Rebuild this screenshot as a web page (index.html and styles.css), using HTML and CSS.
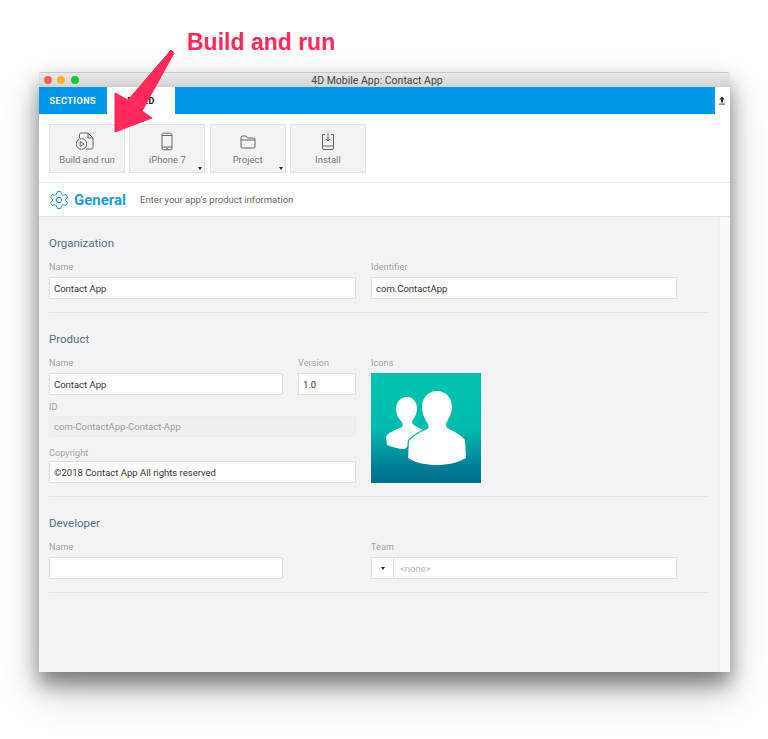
FILE: index.html
```html
<!DOCTYPE html>
<html lang="en">

<head>
    <meta charset="UTF-8">
    <title>4D Mobile App: Contact App</title>
    <link rel="stylesheet" href="styles.css">
</head>

<body>
    <div class="window">
        <div class="titlebar">
            <div class="dots">
                <span class="dot dot-red"></span>
                <span class="dot dot-yellow"></span>
                <span class="dot dot-green"></span>
            </div>
            <div class="title">4D Mobile App: Contact App</div>
        </div>

        <div class="tabbar">
            <div class="tabs">
                <div class="tab">SECTIONS</div>
                <div class="tab tab-active">BUILD</div>
            </div>
            <div class="tab-action">
                <svg width="8" height="9" viewBox="0 0 8 9">
                    <path d="M4 0.5 L6.8 3.5 H5 V6.5 H3 V3.5 H1.2 Z" fill="#333" />
                    <rect x="1" y="7.6" width="6" height="1" fill="#555" />
                </svg>
            </div>
        </div>

        <div class="toolbar">
            <div class="tool">
                <svg class="tool-icon-left" width="20" height="20" viewBox="0 0 20 20" fill="none" stroke="#666" stroke-width="1">
                    <path d="M3.5 6 V2.5 Q3.5 1 5 1 H12 L17 6 V15.5 Q17 17 15.5 17 H10" />
                    <path d="M12 1 V6 H17" />
                    <circle cx="5.5" cy="12" r="5.3" fill="#f3f3f5" />
                    <path d="M4.2 9.6 L8 12 L4.2 14.4 Z" />
                </svg>
                <span>Build and run</span>
            </div>
            <div class="tool tool-menu">
                <svg width="20" height="20" viewBox="0 0 20 20" fill="none" stroke="#666" stroke-width="1">
                    <rect x="5" y="1.2" width="10" height="16.6" rx="1.6" />
                    <path d="M5 3.5 H15 M5 15 H15" />
                    <circle cx="10" cy="16.4" r="0.5" />
                </svg>
                <span>iPhone 7</span>
            </div>
            <div class="tool tool-menu">
                <svg width="20" height="20" viewBox="0 0 20 20" fill="none" stroke="#666" stroke-width="1">
                    <path d="M3 14.5 V5.5 Q3 4 4.5 4 H8 L9.5 6 H15.5 Q17 6 17 7.5 V14.5 Q17 16 15.5 16 H4.5 Q3 16 3 14.5 Z" />
                    <path d="M3 8 H17" />
                </svg>
                <span>Project</span>
            </div>
            <div class="tool">
                <svg width="20" height="20" viewBox="0 0 20 20" fill="none" stroke="#666" stroke-width="1">
                    <path d="M7 2.5 H4.5 V16 Q4.5 17.5 6 17.5 H14 Q15.5 17.5 15.5 16 V2.5 H13" />
                    <path d="M4.5 14 H15.5" />
                    <path d="M10 0.5 V9 M8 7 L10 9 L12 7" />
                </svg>
                <span>Install</span>
            </div>
        </div>

        <div class="section-header">
            <svg width="20" height="20" viewBox="0 0 20 20" fill="none" stroke="#1a9be8" stroke-width="1">
                <path d="M8.3 1.5 H11.7 L12.3 4 L14.4 5.2 L16.9 4.4 L18.6 7.4 L16.7 9.1 V10.9 L18.6 12.6 L16.9 15.6 L14.4 14.8 L12.3 16 L11.7 18.5 H8.3 L7.7 16 L5.6 14.8 L3.1 15.6 L1.4 12.6 L3.3 10.9 V9.1 L1.4 7.4 L3.1 4.4 L5.6 5.2 L7.7 4 Z" stroke-linejoin="round" />
                <circle cx="10" cy="10" r="2.6" />
            </svg>
            <h1>General</h1>
            <p>Enter your app's product information</p>
        </div>

        <div class="content">
            <div class="sections">
                <section class="group">
                    <h2>Organization</h2>
                    <div class="two-cols">
                        <div class="field">
                            <label>Name</label>
                            <div class="box">Contact App</div>
                        </div>
                        <div class="field">
                            <label>Identifier</label>
                            <div class="box">com.ContactApp</div>
                        </div>
                    </div>
                </section>

                <section class="group">
                    <h2>Product</h2>
                    <div class="product-cols">
                        <div class="product-fields">
                            <div class="name-row">
                                <div class="field">
                                    <label>Name</label>
                                    <div class="box">Contact App</div>
                                </div>
                                <div class="field">
                                    <label>Version</label>
                                    <div class="box">1.0</div>
                                </div>
                            </div>
                            <div class="field field-id">
                                <label>ID</label>
                                <div class="box box-disabled">com-ContactApp-Contact-App</div>
                            </div>
                            <div class="field field-copyright">
                                <label>Copyright</label>
                                <div class="box">©2018 Contact App All rights reserved</div>
                            </div>
                        </div>
                        <div class="field">
                            <label>Icons</label>
                            <svg class="app-icon" width="110" height="110" viewBox="0 0 110 110">
                                <defs>
                                    <linearGradient id="teal" gradientUnits="userSpaceOnUse" x1="0" y1="0" x2="0" y2="110">
                                        <stop offset="0" stop-color="#00c3b1" />
                                        <stop offset="0.5" stop-color="#00bdae" />
                                        <stop offset="0.85" stop-color="#007f96" />
                                        <stop offset="1" stop-color="#006f8c" />
                                    </linearGradient>
                                </defs>
                                <rect width="110" height="110" fill="url(#teal)" />
                                <path d="M36 24 C43 24 46 30 46 36 C46 41 43 45 41 49 C41 52 46 54 53 57 L40 70 L34 76 C27 76 21 74 16 72 L15 64 C16 60 24 57 31 54 C32 52 32 50 30 48 C27 45 25 41 25 36 C25 30 29 24 36 24 Z" fill="#fff" />
                                <path d="M66 18 C75 18 81 25 81 34 C81 41 77 46 75 51 C75 54 76 55 78 56 C84 59 90 62 94 67 L95 85 C86 90 76 92 66 92 C55 92 45 90 37 85 L38 68 C43 62 50 59 56 56 C58 55 58 54 57 51 C54 46 51 41 51 34 C51 25 57 18 66 18 Z" fill="#fff" stroke="url(#teal)" stroke-width="2.5" paint-order="stroke" />
                            </svg>
                        </div>
                    </div>
                </section>

                <section class="group">
                    <h2>Developer</h2>
                    <div class="two-cols">
                        <div class="field field-short">
                            <label>Name</label>
                            <div class="box"></div>
                        </div>
                        <div class="field">
                            <label>Team</label>
                            <div class="box box-select">
                                <span class="select-arrow"><i></i></span>
                                <span class="placeholder">&lt;none&gt;</span>
                            </div>
                        </div>
                    </div>
                </section>
            </div>
            <div class="scrollbar"></div>
        </div>
    </div>

    <!-- annotation on top of the screenshot -->
    <div class="callout">Build and run</div>
    <svg class="callout-arrow" width="768" height="160" viewBox="0 0 768 160">
        <path d="M171 50 L174 53 L142 111 L152 118 L115 132 L115 93 L128 100 Z" fill="#ff2a5b" stroke="#ff2a5b" stroke-width="1" stroke-linejoin="round" />
    </svg>
</body>

</html>
```

FILE: styles.css
```css
* {
    box-sizing: border-box;
}

body {
    margin: 0;
    padding: 72px 0 0 38.5px;
    height: 739px;
    overflow: hidden;
    background: #fefefe;
    font-family: 'Roboto', 'Liberation Sans', sans-serif;
    font-size: 9.5px;
    color: #333;
}

.window {
    width: 691px;
    height: 600px;
    display: flex;
    flex-direction: column;
    background: #fff;
    border-radius: 3px 3px 1px 1px;
    box-shadow: 0 12px 20px rgba(0, 0, 0, 0.42), 0 20px 40px rgba(0, 0, 0, 0.2);
}

.titlebar {
    height: 15px;
    padding-right: 14px;
    display: flex;
    align-items: center;
    justify-content: center;
    position: relative;
    background: linear-gradient(to bottom, #e9e9e9, #d2d2d2);
    border-top: 1px solid #c9c9c9;
    border-radius: 3px 3px 0 0;
}

.dots {
    position: absolute;
    left: 5px;
    top: 3px;
    display: flex;
    gap: 5.5px;
}

.dot {
    width: 8px;
    height: 8px;
    border-radius: 50%;
}

.dot-red {
    background: #fb5e50;
}

.dot-yellow {
    background: #fbb52c;
}

.dot-green {
    background: #1cc433;
}

.title {
    color: #444;
    font-size: 10.5px;
}

.tabbar {
    height: 27px;
    display: flex;
}

.tabs {
    width: 676.5px;
    display: flex;
    background: #0099ea;
}

.tab {
    width: 68.5px;
    display: flex;
    align-items: center;
    justify-content: center;
    color: #fff;
    font-size: 9px;
    font-weight: 700;
    letter-spacing: 0.5px;
}

.tab-active {
    width: 68px;
    background: #fff;
    color: #111;
}

.tab-action {
    flex: 1;
    display: flex;
    align-items: center;
    justify-content: center;
}

.toolbar {
    height: 68px;
    padding: 9.5px 0 0 10.5px;
    display: flex;
    gap: 4.3px;
}

.tool {
    width: 76px;
    height: 49.5px;
    position: relative;
    display: flex;
    flex-direction: column;
    align-items: center;
    padding-top: 7.5px;
    gap: 2px;
    background: #f3f3f5;
    border: 1.5px solid #e2e2e2;
    color: #777;
}

.tool-icon-left {
    margin-right: 2px;
}

.tool span {
    line-height: 12px;
}

.tool-menu::after {
    content: "";
    position: absolute;
    right: 2px;
    bottom: 2px;
    border-left: 2.5px solid transparent;
    border-right: 2.5px solid transparent;
    border-top: 3px solid #222;
}

.section-header {
    height: 35px;
    padding-left: 10.5px;
    display: flex;
    align-items: center;
    border-top: 1px solid #e6e6e6;
    border-bottom: 1px solid #e2e2e2;
}

.section-header h1 {
    margin: 0 0 0 5px;
    color: #1a9be8;
    font-size: 15px;
    font-weight: 700;
}

.section-header p {
    margin: 0 0 0 14px;
    color: #666;
}

.content {
    flex: 1;
    display: flex;
    background: #f3f3f5;
}

.sections {
    flex: 1;
    padding: 0 11px 0 10.5px;
}

.scrollbar {
    width: 10.5px;
    background: #f9f9f9;
    border-left: 1px solid #efeff0;
}

.group {
    padding: 19px 0 13px;
    border-bottom: 1px solid #e3e3e5;
}

.group h2 {
    margin: 0 0 11px;
    color: #54707f;
    font-size: 11.5px;
    font-weight: 400;
    line-height: 14px;
}

.two-cols {
    display: grid;
    grid-template-columns: 307px 306px;
    column-gap: 15px;
}

.field label {
    display: block;
    margin-bottom: 4px;
    color: #a2a2a2;
    font-size: 9px;
    line-height: 12px;
    letter-spacing: 0.1px;
}

.field-short {
    width: 234px;
}

.field-id label {
    margin-bottom: 3px;
}

.field-copyright {
    margin-top: 4px;
}

.field-copyright label {
    margin-bottom: 2px;
}

.box {
    height: 22px;
    padding: 0 4px;
    display: flex;
    align-items: center;
    background: #fff;
    border: 1px solid #dfdfdf;
    color: #333;
}

.box-disabled {
    height: 21px;
    background: #f0f0f1;
    border-color: #ededee;
    color: #9b9b9b;
}

.box-select {
    padding: 0;
}

.select-arrow {
    width: 22px;
    height: 100%;
    display: flex;
    align-items: center;
    justify-content: center;
    border-right: 1px solid #dfdfdf;
}

.select-arrow i {
    border-left: 2.5px solid transparent;
    border-right: 2.5px solid transparent;
    border-top: 3px solid #222;
}

.placeholder {
    margin-left: 6px;
    color: #b9b5c2;
}

.product-cols {
    display: grid;
    grid-template-columns: 307px 110px;
    column-gap: 15px;
}

.product-fields {
    display: flex;
    flex-direction: column;
    gap: 6px;
}

.name-row {
    display: grid;
    grid-template-columns: 234px 58px;
    column-gap: 15px;
}

.app-icon {
    display: block;
}

.callout {
    position: absolute;
    left: 187px;
    top: 29px;
    color: #ff2a5b;
    font-family: 'Liberation Sans', sans-serif;
    font-size: 23px;
    font-weight: 700;
}

.callout-arrow {
    position: absolute;
    left: 0;
    top: 0;
}
```
